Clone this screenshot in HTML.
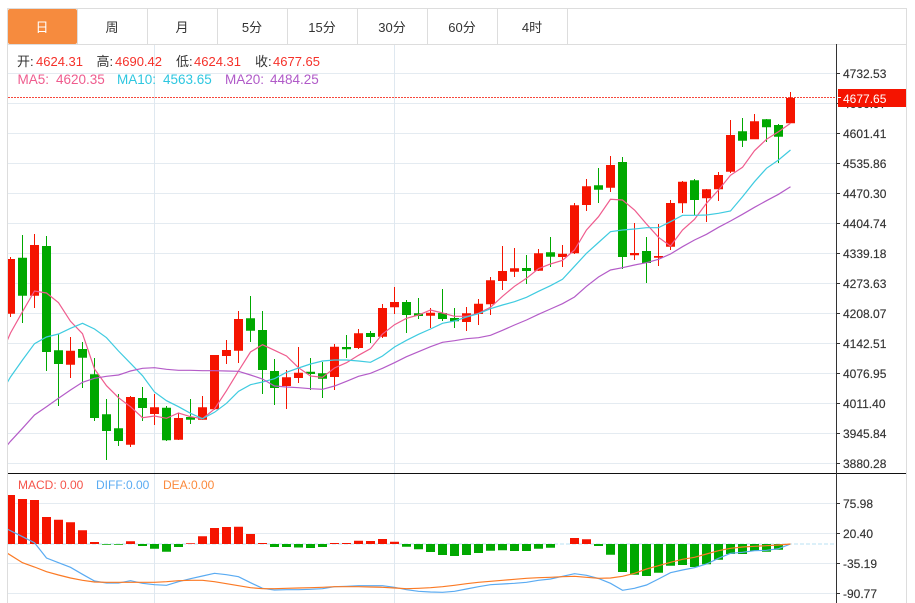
<!DOCTYPE html>
<html><head><meta charset="utf-8"><title>K线</title>
<style>
html,body{margin:0;padding:0;background:#fff;width:915px;height:603px;overflow:hidden}
svg{display:block}
text{font-family:"Liberation Sans","Noto Sans CJK SC",sans-serif;white-space:pre}
.t{font-size:13px;fill:#333;text-anchor:middle}
.a{font-size:12px;fill:#333;stroke:#333;stroke-width:.15}
.i{font-size:13px}
.j{font-size:13.5px}
.m{font-size:12px}
</style></head><body>
<svg width="915" height="603" viewBox="0 0 915 603" xmlns="http://www.w3.org/2000/svg">
<defs><clipPath id="c"><rect x="8" y="45" width="828" height="558"/></clipPath></defs>
<rect width="915" height="603" fill="#fff"/>
<!-- grid -->
<path fill="none" stroke="#e4ebf1" stroke-width="1" d="M8 73.5H836M8 103.5H836M8 133.5H836M8 163.5H836M8 193.5H836M8 223.5H836M8 253.5H836M8 283.5H836M8 313.5H836M8 343.5H836M8 373.5H836M8 403.5H836M8 433.5H836M8 463.5H836M8 503.5H836M8 533.5H836M8 563.5H836M8 593.5H836"/>
<path fill="none" stroke="#dfe8f0" stroke-width="1" d="M154.5 45V603M394.5 45V603"/>
<!-- frame -->
<path fill="none" stroke="#ddd" stroke-width="1" d="M7.5 603V8.5H906.5V603M8 44.5H906.5M147.5 9V44M217.5 9V44M287.5 9V44M357.5 9V44M427.5 9V44M497.5 9V44M567.5 9V44"/>
<path d="M8 473.5H906" stroke="#111" stroke-width="1"/>
<path d="M836.5 44V603" stroke="#333" stroke-width="1"/>
<!-- tabs -->
<rect x="8" y="9" width="69" height="35" rx="2" fill="#f68b3e"/>
<path d="M77.5 9V44" stroke="#ddd"/>
<text class="t" x="42" y="32" style="fill:#fff">日</text>
<text class="t" x="112" y="32">周</text>
<text class="t" x="182" y="32">月</text>
<text class="t" x="252" y="32">5分</text>
<text class="t" x="322" y="32">15分</text>
<text class="t" x="392" y="32">30分</text>
<text class="t" x="462" y="32">60分</text>
<text class="t" x="532" y="32">4时</text>
<g clip-path="url(#c)">
<!-- last price dotted -->
<path d="M8 97.5H836" stroke="#f6483c" stroke-width="1" stroke-dasharray="2 1"/>
<!-- wicks -->
<path fill="none" stroke="#f51400" stroke-width="1" d="M10.5 257V317M34.5 234V308M70.5 337V378M130.5 396V447M154.5 394V425M178.5 413V440M202.5 396V420M214.5 355V410M226.5 340V364M238.5 311V363M286.5 370V409M298.5 347V383M334.5 344V390M358.5 329V349M382.5 304V338M394.5 287V314M430.5 308V328M466.5 307V331M478.5 299V325M490.5 277V315M502.5 246V290M514.5 248V277M538.5 249V271M562.5 245V267M574.5 203V254M586.5 179V211M610.5 156V192M634.5 223V260M658.5 224V266M670.5 200V250M682.5 181V213M706.5 189V222M718.5 172V201M730.5 120V173M754.5 114V139M790.5 92V123"/>
<path fill="none" stroke="#00a800" stroke-width="1" d="M22.5 235V323M46.5 236V371M58.5 334V406M82.5 342V388M94.5 358V421M106.5 399V460M118.5 394V446M142.5 387V421M166.5 406V441M190.5 399V424M250.5 296V342M262.5 311V394M274.5 359V405M310.5 358V390M322.5 362V398M346.5 335V358M370.5 331V343M406.5 300V333M418.5 298V319M442.5 289V321M454.5 308V328M526.5 255V284M550.5 237V267M598.5 168V203M622.5 157V269M646.5 237V283M694.5 179V215M742.5 118V147M766.5 119V142M778.5 124V163"/>
<!-- bodies -->
<path fill="#f51400" d="M6 259h9V313.7h-9zM30 245h9V295.7h-9zM66 350.7h9V364.7h-9zM126 397h9V444.7h-9zM150 407.3h9V414h-9zM174 418h9V439.7h-9zM198 407.3h9V419.7h-9zM210 355h9V409.3h-9zM222 350h9V356h-9zM234 319h9V350.7h-9zM282 377.3h9V386h-9zM294 372.7h9V378h-9zM330 346.7h9V377h-9zM354 333.3h9V348h-9zM378 308h9V336.7h-9zM390 302h9V307.3h-9zM426 312.7h9V315.7h-9zM462 313.3h9V322h-9zM474 303.7h9V314h-9zM486 280.3h9V304.3h-9zM498 271h9V281h-9zM510 268.3h9V271.7h-9zM534 253.3h9V270.7h-9zM558 253.7h9V257h-9zM570 205.3h9V253.3h-9zM582 186.3h9V205h-9zM606 165h9V187.7h-9zM630 253h9V255.3h-9zM654 256h9V257.7h-9zM666 203h9V246.7h-9zM678 181.7h9V203.3h-9zM702 189.3h9V198.3h-9zM714 175h9V189.3h-9zM726 135h9V171.7h-9zM750 121.3h9V139.3h-9zM786 98h9V123.3h-9z"/>
<path fill="#00a800" d="M18 257.7h9V295.7h-9zM42 246h9V352h-9zM54 350.3h9V364h-9zM78 349h9V357.7h-9zM90 374.3h9V418h-9zM102 414.3h9V431h-9zM114 428.3h9V441h-9zM138 398h9V408h-9zM162 407.7h9V440.3h-9zM186 417h9V419.7h-9zM246 318.3h9V330.7h-9zM258 330h9V370h-9zM270 371h9V388h-9zM306 371.7h9V374h-9zM318 373.3h9V378.7h-9zM342 347h9V349.3h-9zM366 333h9V337h-9zM402 302h9V315h-9zM414 313.3h9V316h-9zM438 313h9V319h-9zM450 318h9V321.3h-9zM522 268h9V271h-9zM546 252.3h9V256.7h-9zM594 185.3h9V189.7h-9zM618 162h9V257h-9zM642 251h9V263h-9zM690 180.3h9V200h-9zM738 131.3h9V140.7h-9zM762 119.3h9V127.3h-9zM774 125h9V136.7h-9z"/>
<!-- MA lines -->
<polyline fill="none" stroke="#ef5c8e" stroke-width="1.2" points="7 341 10.5 333 22.5 311.7 34.5 291 46.5 293 58.5 302.7 70.5 321.3 82.5 333.7 94.5 369 106.5 385.7 118.5 397.7 130.5 406.7 142.5 417.7 154.5 416 166.5 418.3 178.5 413 190.5 416.7 202.5 418.7 214.5 409 226.5 390.7 238.5 371 250.5 352 262.5 344.7 274.5 350.3 286.5 356 298.5 367.7 310.5 376 322.5 377.3 334.5 368 346.5 362.7 358.5 355.3 370.5 348.7 382.5 334 394.5 324.7 406.5 318.3 418.5 315 430.5 310 442.5 313 454.5 316.3 466.5 316.3 478.5 313.3 490.5 307.3 502.5 296.3 514.5 286.3 526.5 278.3 538.5 268.7 550.5 264 562.5 260.3 574.5 250 586.5 230 598.5 216.7 610.5 199.3 622.5 200 634.5 210 646.5 224 658.5 237.3 670.5 246 682.5 230 694.5 219.3 706.5 203.3 718.5 190 730.5 175.3 742.5 167.3 754.5 150.7 766.5 139.3 778.5 131.7 790.5 123.3"/>
<polyline fill="none" stroke="#3fcbe0" stroke-width="1.2" points="7 383 10.5 377 22.5 360 34.5 343.7 46.5 337 58.5 334 70.5 328.3 82.5 323.3 94.5 329 106.5 337.7 118.5 351 130.5 363.3 142.5 375.7 154.5 392 166.5 400.7 178.5 406.7 190.5 413.3 202.5 418.7 214.5 412.3 226.5 403.3 238.5 391.3 250.5 384.7 262.5 382 274.5 378.7 286.5 372.3 298.5 368 310.5 364 322.5 361 334.5 360 346.5 360 358.5 361 370.5 362.3 382.5 356 394.5 347 406.5 340.3 418.5 334.3 430.5 329 442.5 323.3 454.5 321 466.5 317 478.5 313.7 490.5 308.7 502.5 305 514.5 301.7 526.5 297.3 538.5 291.3 550.5 285.7 562.5 279.3 574.5 266.3 586.5 253.3 598.5 242.5 610.5 231.7 622.5 230 634.5 229 646.5 227.7 658.5 227.7 670.5 221.7 682.5 215.3 694.5 215.3 706.5 215 718.5 213.3 730.5 211 742.5 196.7 754.5 181.7 766.5 168.3 778.5 160 790.5 150"/>
<polyline fill="none" stroke="#b45cc8" stroke-width="1.2" points="7 445.5 10.5 441.3 22.5 428.3 34.5 415 46.5 406.7 58.5 398.3 70.5 390 82.5 382.3 94.5 378.3 106.5 376.3 118.5 375 130.5 371 142.5 368.3 154.5 367.7 166.5 369.3 178.5 370.3 190.5 370.3 202.5 370.7 214.5 370.7 226.5 371 238.5 371.3 250.5 375 262.5 379 274.5 386 286.5 387 298.5 387.7 310.5 388.7 322.5 389.3 334.5 386 346.5 381.3 358.5 376.3 370.5 373.3 382.5 368.3 394.5 362.7 406.5 356.7 418.5 351.7 430.5 346.7 442.5 342.3 454.5 340.7 466.5 338.7 478.5 337.7 490.5 335.3 502.5 330.3 514.5 325 526.5 320 538.5 314.3 550.5 309 562.5 303.7 574.5 297 586.5 286.3 598.5 277 610.5 270 622.5 267.7 634.5 265 646.5 262.7 658.5 259.3 670.5 254 682.5 246.7 694.5 240 706.5 234.3 718.5 227.3 730.5 221 742.5 214.3 754.5 207.3 766.5 200.7 778.5 194.3 790.5 186.7"/>
<!-- MACD bars -->
<path d="M8 544H836" stroke="#b8e2f3" stroke-width="1" stroke-dasharray="4 2"/>
<path fill="#f51400" d="M6 495h9V544h-9zM18 499h9V544h-9zM30 500h9V544h-9zM42 517h9V544h-9zM54 519.7h9V544h-9zM66 522.3h9V544h-9zM78 530.3h9V544h-9zM90 542h9V544h-9zM126 541.3h9V544h-9zM186 543.3h9V544h-9zM198 536.3h9V544h-9zM210 528h9V544h-9zM222 527h9V544h-9zM234 526.7h9V544h-9zM246 534h9V544h-9zM258 543h9V544h-9zM330 543h9V544h-9zM342 543h9V544h-9zM354 540.7h9V544h-9zM366 541h9V544h-9zM378 539h9V544h-9zM390 541.7h9V544h-9zM570 538h9V544h-9zM582 539.3h9V544h-9z"/>
<path fill="#00a800" d="M102 544h9V544.7h-9zM114 544h9V544.7h-9zM138 544h9V546h-9zM150 544h9V548.7h-9zM162 544h9V551.7h-9zM174 544h9V547h-9zM270 544h9V547h-9zM282 544h9V547h-9zM294 544h9V547.5h-9zM306 544h9V548h-9zM318 544h9V547h-9zM402 544h9V546.7h-9zM414 544h9V549.3h-9zM426 544h9V552h-9zM438 544h9V555h-9zM450 544h9V556h-9zM462 544h9V555h-9zM474 544h9V553h-9zM486 544h9V550.7h-9zM498 544h9V550.3h-9zM510 544h9V551h-9zM522 544h9V551h-9zM534 544h9V548.7h-9zM546 544h9V547.7h-9zM594 544h9V546h-9zM606 544h9V554.7h-9zM618 544h9V572h-9zM630 544h9V574.7h-9zM642 544h9V576h-9zM654 544h9V572.7h-9zM666 544h9V565.7h-9zM678 544h9V565h-9zM690 544h9V567h-9zM702 544h9V564.3h-9zM714 544h9V559.7h-9zM726 544h9V554h-9zM738 544h9V554h-9zM750 544h9V551h-9zM762 544h9V551.7h-9zM774 544h9V549.7h-9z"/>
<polyline fill="none" stroke="#5aabf2" stroke-width="1.2" points="7 529 22.5 536.7 34.5 542.7 46.5 558 58.5 562.7 70.5 567.3 82.5 574.3 94.5 581 106.5 583 118.5 583 130.5 580.7 142.5 583.3 154.5 584.7 166.5 585.3 178.5 581.7 190.5 578.7 202.5 576 214.5 573.3 226.5 574.7 238.5 576.7 250.5 582.7 262.5 588.3 274.5 590 286.5 589.7 298.5 589.7 310.5 589.3 322.5 588.7 334.5 586.7 346.5 586.3 358.5 585.7 370.5 585.7 382.5 585.7 394.5 587.3 406.5 589.7 418.5 591.3 430.5 592 442.5 592.3 454.5 591.3 466.5 589 478.5 586.7 490.5 584.7 502.5 584 514.5 583.3 526.5 582.3 538.5 580.3 550.5 579 562.5 576.3 574.5 573.7 586.5 575.3 598.5 578.5 610.5 583.3 622.5 590.3 634.5 588.3 646.5 585 658.5 579 670.5 572.7 682.5 570 694.5 567.7 706.5 564 718.5 558.3 730.5 553.3 742.5 552.3 754.5 550.7 766.5 550.3 778.5 548.7 790.5 544"/>
<polyline fill="none" stroke="#fb7a25" stroke-width="1.2" points="7 553 22.5 562.7 34.5 567 46.5 571.7 58.5 575 70.5 578 82.5 580.3 94.5 582 106.5 582.3 118.5 582.3 130.5 582.3 142.5 582.3 154.5 582.3 166.5 581.7 178.5 580.7 190.5 580.3 202.5 580.3 214.5 581.7 226.5 583.7 238.5 585.7 250.5 587.7 262.5 588.7 274.5 588.7 286.5 588.3 298.5 588 310.5 587.7 322.5 587.3 334.5 586.7 346.5 586.7 358.5 586.7 370.5 587 382.5 587.3 394.5 588 406.5 588.7 418.5 588.3 430.5 587.7 442.5 586.7 454.5 585.3 466.5 583.7 478.5 582.3 490.5 581.3 502.5 580.3 514.5 579.3 526.5 578.3 538.5 577.7 550.5 577.3 562.5 576.7 574.5 576.3 586.5 577.3 598.5 578.3 610.5 578 622.5 576.3 634.5 573.3 646.5 569 658.5 565.7 670.5 562.3 682.5 559.3 694.5 557.3 706.5 554 718.5 550.7 730.5 548.3 742.5 547 754.5 546.3 766.5 545.7 778.5 545 790.5 544"/>
</g>
<!-- info text -->
<text class="i" x="17" y="66" style="fill:#333">开:</text><text class="i" x="36" y="66" fill="#f5312a">4624.31</text>
<text class="i" x="96.500" y="66" style="fill:#333">高:</text><text class="i" x="115" y="66" fill="#f5312a">4690.42</text>
<text class="i" x="176" y="66" style="fill:#333">低:</text><text class="i" x="194" y="66" fill="#f5312a">4624.31</text>
<text class="i" x="255" y="66" style="fill:#333">收:</text><text class="i" x="273" y="66" fill="#f5312a">4677.65</text>
<g fill="#ef5c8e"><text class="j" x="17.500" y="84">MA5:</text><text class="j" x="56" y="84">4620.35</text></g>
<g fill="#2ec7e0"><text class="j" x="117" y="84">MA10:</text><text class="j" x="163" y="84">4563.65</text></g>
<g fill="#b05ac8"><text class="j" x="225" y="84">MA20:</text><text class="j" x="270" y="84">4484.25</text></g>
<text class="m" x="18" y="489" fill="#f5544a">MACD:</text><text class="m" x="60" y="489" fill="#f5544a">0.00</text>
<text class="m" x="96" y="489" fill="#5aabf2">DIFF:</text><text class="m" x="126" y="489" fill="#5aabf2">0.00</text>
<text class="m" x="163" y="489" fill="#fb8a3c">DEA:</text><text class="m" x="191" y="489" fill="#fb8a3c">0.00</text>
<!-- ticks -->
<path stroke="#333" stroke-width="1" d="M837 73.500h3M837 103.500h3M837 133.500h3M837 163.500h3M837 193.500h3M837 223.500h3M837 253.500h3M837 283.500h3M837 313.500h3M837 343.500h3M837 373.500h3M837 403.500h3M837 433.500h3M837 463.500h3M837 503.500h3M837 533.500h3M837 563.500h3M837 593.500h3"/>
<!-- axis labels -->
<text class="a" x="843" y="78">4732.53</text>
<text class="a" x="843" y="108">4666.97</text>
<text class="a" x="843" y="138">4601.41</text>
<text class="a" x="843" y="168">4535.86</text>
<text class="a" x="843" y="198">4470.30</text>
<text class="a" x="843" y="228">4404.74</text>
<text class="a" x="843" y="258">4339.18</text>
<text class="a" x="843" y="288">4273.63</text>
<text class="a" x="843" y="318">4208.07</text>
<text class="a" x="843" y="348">4142.51</text>
<text class="a" x="843" y="378">4076.95</text>
<text class="a" x="843" y="408">4011.40</text>
<text class="a" x="843" y="438">3945.84</text>
<text class="a" x="843" y="468">3880.28</text>
<text class="a" x="843" y="508">75.98</text>
<text class="a" x="843" y="538">20.40</text>
<text class="a" x="843" y="568">-35.19</text>
<text class="a" x="843" y="598">-90.77</text>
<!-- price tag -->
<rect x="838" y="89" width="68" height="18" fill="#f51400"/>
<path d="M837 97.500h4" stroke="#fff" stroke-width="1"/>
<text x="843" y="103" font-size="12" fill="#fff">4677.65</text>
</svg>
</body></html>
